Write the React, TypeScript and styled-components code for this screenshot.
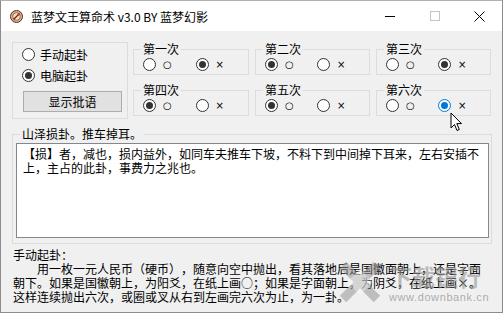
import { styled, createGlobalStyle } from "styled-components";

const GlobalStyle = createGlobalStyle`
  html, body {
    margin: 0;
    padding: 0;
    background: #ffffff;
  }
  body {
    font-family: "Noto Sans CJK SC", "Noto Sans", sans-serif;
    color: #000;
    text-spacing-trim: space-all;
  }
`;

type Throw = { name: string; pick: 0 | 1; hot?: boolean };

const throws: Throw[] = [
  { name: "第一次", pick: 1 },
  { name: "第二次", pick: 0 },
  { name: "第三次", pick: 1 },
  { name: "第四次", pick: 0 },
  { name: "第五次", pick: 0 },
  { name: "第六次", pick: 1, hot: true },
];

const AppIcon = () => (
  <svg width="13" height="13" viewBox="0 0 13 13">
    <circle cx="6.5" cy="6.5" r="6" fill="#d9b48f" stroke="#5a2f20" strokeWidth="1" />
    <circle cx="6.5" cy="6.5" r="3.8" fill="#f3e2cc" stroke="#8a4b32" strokeWidth="0.8" />
    <path d="M4 9 L9 4" stroke="#7a2a1a" strokeWidth="1.4" strokeLinecap="round" />
    <circle cx="8.6" cy="4.4" r="1" fill="#c0392b" />
  </svg>
);

const Cursor = () => (
  <svg width="13" height="20" viewBox="0 0 13 20">
    <path
      d="M1 1 L1 16 L4.5 12.5 L7 18.5 L9.3 17.5 L6.8 11.6 L11.5 11.6 Z"
      fill="#ffffff"
      stroke="#000000"
      strokeWidth="1"
      strokeLinejoin="round"
    />
  </svg>
);

const Radio = ({ on, hot }: { on?: boolean; hot?: boolean }) => (
  <St.Dot $on={on} $hot={hot} />
);

const App = () => {
  return (
    <>
      <GlobalStyle />
      <St.Window>
        <St.TitleBar>
          <St.TitleIcon>
            <AppIcon />
          </St.TitleIcon>
          <St.Title>蓝梦文王算命术 v3.0 BY 蓝梦幻影</St.Title>
          <St.Caption>
            <St.CapBtn>
              <St.MinGlyph />
            </St.CapBtn>
            <St.CapBtn>
              <St.MaxGlyph />
            </St.CapBtn>
            <St.CapBtn>
              <svg width="11" height="11" viewBox="0 0 11 11">
                <path d="M0.5 0.5 L10.5 10.5 M10.5 0.5 L0.5 10.5" stroke="#000" strokeWidth="1" />
              </svg>
            </St.CapBtn>
          </St.Caption>
        </St.TitleBar>

        <St.Body>
          <St.TopRow>
            <St.ModeBox>
              <St.ModeRow>
                <Radio />
                <span>手动起卦</span>
              </St.ModeRow>
              <St.ModeRow>
                <Radio on />
                <span>电脑起卦</span>
              </St.ModeRow>
              <St.Button>显示批语</St.Button>
            </St.ModeBox>

            <St.ThrowGrid>
              {throws.map((t) => (
                <St.Group key={t.name}>
                  <St.Legend>{t.name}</St.Legend>
                  <St.OptionRow>
                    <St.Option>
                      <Radio on={t.pick === 0} />
                      <St.Sym>○</St.Sym>
                    </St.Option>
                    <St.Option>
                      <Radio on={t.pick === 1} hot={t.hot} />
                      <St.Sym>×</St.Sym>
                    </St.Option>
                  </St.OptionRow>
                </St.Group>
              ))}
            </St.ThrowGrid>
          </St.TopRow>

          <St.TextGroup>
            <St.TextLegend>山泽损卦。推车掉耳。</St.TextLegend>
            <St.TextBox>
              【损】者，减也，损内益外，如同车夫推车下坡，不料下到中间掉下耳来，左右安插不上，主占的此卦，事费力之兆也。
            </St.TextBox>
          </St.TextGroup>

          <St.Help>
            <St.HelpTitle>手动起卦：</St.HelpTitle>
            <St.HelpText>
              用一枚一元人民币（硬币），随意向空中抛出，看其落地后是国徽面朝上，还是字面朝下。如果是国徽朝上，为阳爻，在纸上画○；如果是字面朝上，为阴爻，在纸上画×。这样连续抛出六次，或圈或叉从右到左画完六次为止，为一卦。
            </St.HelpText>
          </St.Help>
        </St.Body>

        <St.Watermark>
          <svg width="42" height="42" viewBox="0 0 42 42">
            <path d="M4 4 L38 38 M38 4 L4 38" stroke="rgba(150,150,150,0.55)" strokeWidth="9" />
            <path d="M21 8 L34 21 L21 34 L8 21 Z" fill="rgba(255,255,255,0.35)" />
          </svg>
          <St.MarkText>
            <St.MarkBig>下载银行</St.MarkBig>
            <St.MarkUrl>www.downbank.cn</St.MarkUrl>
          </St.MarkText>
        </St.Watermark>

        <St.Pointer>
          <Cursor />
        </St.Pointer>
      </St.Window>
    </>
  );
};

export default App;

const St = {
  Window: styled.div`
    position: relative;
    display: flex;
    flex-direction: column;
    width: 503px;
    height: 313px;
    box-sizing: border-box;
    border: 1px solid #8c8c8c;
    border-top-color: #b0b0b0;
    overflow: hidden;
    background: #f0f0f0;
  `,
  TitleBar: styled.div`
    display: flex;
    align-items: center;
    height: 30px;
    background: #ffffff;
  `,
  TitleIcon: styled.div`
    display: flex;
    margin-left: 9px;
    margin-right: 8px;
  `,
  Title: styled.div`
    font-family: "Noto Sans CJK SC", "Noto Sans", sans-serif;
    font-size: 12px;
    color: #000;
    flex: 1;
  `,
  Caption: styled.div`
    display: flex;
    height: 100%;
  `,
  CapBtn: styled.div`
    display: flex;
    align-items: center;
    justify-content: center;
    width: 45px;
    height: 100%;
  `,
  MinGlyph: styled.span`
    display: block;
    width: 10px;
    height: 1px;
    background: #000;
  `,
  MaxGlyph: styled.span`
    display: block;
    width: 10px;
    height: 10px;
    box-sizing: border-box;
    border: 1px solid #c4c4c4;
  `,
  Body: styled.div`
    flex: 1;
    display: flex;
    flex-direction: column;
    padding: 11px 10px 0 11px;
    background: #f0f0f0;
    font-size: 12px;
  `,
  TopRow: styled.div`
    display: flex;
    align-items: flex-start;
    gap: 5px;
  `,
  ModeBox: styled.div`
    display: flex;
    flex-direction: column;
    width: 116px;
    height: 77px;
    box-sizing: border-box;
    border: 1px solid #dcdcdc;
    padding: 1px 0 0 9px;
  `,
  ModeRow: styled.div`
    display: flex;
    align-items: center;
    gap: 5px;
    height: 21px;
    font-size: 12px;
    line-height: 14px;
  `,
  Button: styled.div`
    display: flex;
    align-items: center;
    justify-content: center;
    width: 99px;
    height: 21px;
    box-sizing: border-box;
    margin: 5px 0 0 1px;
    background: #e1e1e1;
    border: 1px solid #adadad;
    font-size: 12px;
  `,
  ThrowGrid: styled.div`
    display: grid;
    grid-template-columns: 116px 115px 115px;
    column-gap: 6px;
    row-gap: 8px;
  `,
  Group: styled.fieldset`
    margin: 0;
    padding: 0 0 3px 9px;
    min-width: 0;
    border: 1px solid #dcdcdc;
  `,
  Legend: styled.legend`
    margin-left: -2px;
    padding: 0 2px;
    font-size: 12px;
    line-height: 14px;
  `,
  OptionRow: styled.div`
    display: flex;
    margin-top: 2px;
  `,
  Option: styled.div`
    display: flex;
    align-items: center;
    gap: 7px;
    width: 54px;
    height: 13px;
  `,
  Dot: styled.span<{ $on?: boolean; $hot?: boolean }>`
    display: flex;
    align-items: center;
    justify-content: center;
    flex: none;
    width: 13px;
    height: 13px;
    box-sizing: border-box;
    border-radius: 50%;
    border: 1px solid ${(p) => (p.$hot ? "#0078d7" : "#333333")};
    background: #ffffff;
    &::after {
      content: "";
      display: ${(p) => (p.$on ? "block" : "none")};
      width: 7px;
      height: 7px;
      border-radius: 50%;
      background: ${(p) => (p.$hot ? "#0078d7" : "#333333")};
    }
  `,
  Sym: styled.span`
    font-family: "DejaVu Sans", sans-serif;
    font-size: 10px;
    line-height: 13px;
  `,
  TextGroup: styled.fieldset`
    margin: 8px 0 0 0;
    padding: 0 2px 5px 3px;
    min-width: 0;
    border: 1px solid #dcdcdc;
  `,
  TextLegend: styled.legend`
    margin-left: 4px;
    padding: 0 2px;
    font-size: 12px;
    line-height: 14px;
  `,
  TextBox: styled.div`
    height: 95px;
    box-sizing: border-box;
    margin-top: 2px;
    padding: 3px 5px 3px 6px;
    background: #ffffff;
    border: 1px solid #828790;
    font-size: 12px;
    line-height: 14px;
  `,
  Help: styled.div`
    margin-top: 4px;
    padding: 0 1px 0 1px;
    font-size: 12px;
    line-height: 14px;
  `,
  HelpTitle: styled.div``,
  HelpText: styled.div`
    text-indent: 24px;
  `,
  Watermark: styled.div`
    position: absolute;
    left: 338px;
    top: 260px;
    display: flex;
    align-items: center;
    gap: 8px;
    pointer-events: none;
  `,
  MarkText: styled.div`
    display: flex;
    flex-direction: column;
    align-items: flex-start;
  `,
  MarkBig: styled.span`
    font-family: "Noto Sans CJK SC", sans-serif;
    font-weight: 700;
    font-size: 23px;
    line-height: 30px;
    color: rgba(150, 150, 150, 0.6);
  `,
  MarkUrl: styled.span`
    font-family: "Liberation Sans", sans-serif;
    font-size: 11px;
    line-height: 12px;
    letter-spacing: 0.6px;
    color: rgba(140, 140, 140, 0.7);
  `,
  Pointer: styled.div`
    position: absolute;
    left: 449px;
    top: 111px;
    display: flex;
  `,
};
